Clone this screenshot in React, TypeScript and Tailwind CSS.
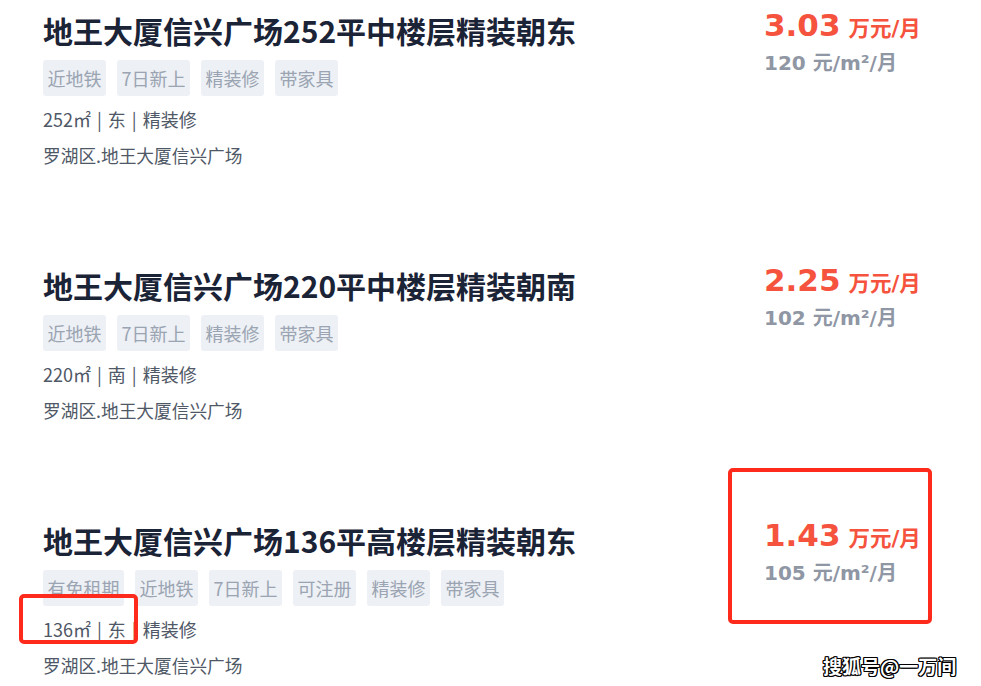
import React from 'react';

type Listing = {
  title: string;
  tags: string[];
  area: string;
  facing: string;
  price: string;
  unit: string;
};

const listings: Listing[] = [
  {
    title: '地王大厦信兴广场252平中楼层精装朝东',
    tags: ['近地铁', '7日新上', '精装修', '带家具'],
    area: '252㎡',
    facing: '东',
    price: '3.03',
    unit: '120',
  },
  {
    title: '地王大厦信兴广场220平中楼层精装朝南',
    tags: ['近地铁', '7日新上', '精装修', '带家具'],
    area: '220㎡',
    facing: '南',
    price: '2.25',
    unit: '102',
  },
  {
    title: '地王大厦信兴广场136平高楼层精装朝东',
    tags: ['有免租期', '近地铁', '7日新上', '可注册', '精装修', '带家具'],
    area: '136㎡',
    facing: '东',
    price: '1.43',
    unit: '105',
  },
];

const cjk = "font-['Noto_Sans_CJK_SC','Noto_Sans',sans-serif]";
const num = "font-['DejaVu_Sans','Noto_Sans_CJK_SC',sans-serif]";

function ListingRow({ item }: { item: Listing }) {
  return (
    <div className="flex h-[255px]">
      <div className="w-[721px]">
        <h3 className={`${cjk} text-[30px] leading-[40px] font-bold text-[#1b2336]`}>{item.title}</h3>
        <div className="mt-[10px] flex gap-[11px]">
          {item.tags.map((tag) => (
            <span
              key={tag}
              className={`${cjk} h-[36px] px-[4.5px] rounded-[3px] bg-[#edf0f4] text-[18px] leading-[36px] text-[#9aa4b2]`}
            >
              {tag}
            </span>
          ))}
        </div>
        <div className={`${cjk} mt-[11px] flex gap-[6px] text-[18px] leading-[24px] text-[#4f5866]`}>
          <span>{item.area}</span>
          <span>|</span>
          <span>{item.facing}</span>
          <span>|</span>
          <span>精装修</span>
        </div>
        <p className={`${cjk} mt-[12px] text-[17.7px] leading-[24px] text-[#4f5866]`}>罗湖区.地王大厦信兴广场</p>
      </div>
      <div>
        <div className="flex items-baseline gap-[8px] leading-[30px] text-[#f5533d]">
          <span className={`${num} text-[31px] font-bold`}>{item.price}</span>
          <span className={`${num} text-[21.5px] leading-none font-bold`}>万元/月</span>
        </div>
        <div className={`${num} mt-[10px] text-[20px] leading-[26px] font-bold text-[#8f96a4]`}>
          {item.unit} 元/m²/月
        </div>
      </div>
    </div>
  );
}

export default function App() {
  return (
    <div className="relative h-[686px] w-[981px] overflow-hidden bg-white">
      <div className="pl-[43px] pt-[10px]">
        {listings.map((item) => (
          <ListingRow key={item.title} item={item} />
        ))}
      </div>

      {/* red annotation boxes */}
      <div className="absolute left-[728px] top-[468px] h-[156px] w-[204px] rounded-[5px] border-[4px] border-[#fe2a1c]" />
      <div className="absolute left-[19px] top-[594px] h-[50px] w-[119px] rounded-[5px] border-[4px] border-[#fe2a1c]" />

      {/* watermark */}
      <div
        className={`${cjk} absolute left-[823px] top-[652px] text-[19px] font-bold text-white [text-shadow:1px_1px_0_#000,-1px_-1px_0_#000,1px_-1px_0_#000,-1px_1px_0_#000,0_1px_0_#000,0_-1px_0_#000,1px_0_0_#000,-1px_0_0_#000]`}
      >
        搜狐号@一万间
      </div>
    </div>
  );
}
